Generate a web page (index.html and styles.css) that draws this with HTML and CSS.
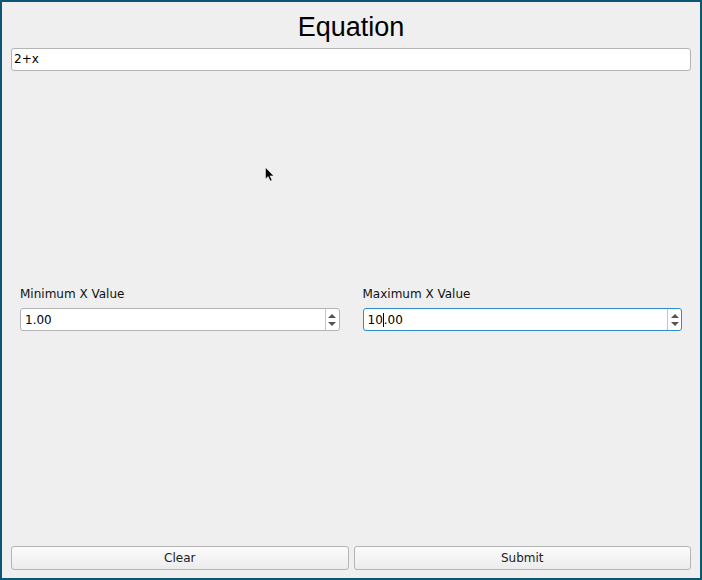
FILE: index.html
```html
<!DOCTYPE html>
<html>
<head>
<meta charset="utf-8">
<link rel="stylesheet" href="styles.css">
</head>
<body>
<div class="window">
  <h1 class="title">Equation</h1>
  <div class="lineedit">2+x</div>
  <div class="middle">
    <div class="range">
      <div class="field">
        <div class="label">Minimum X Value</div>
        <div class="spinbox">
          <div class="spin-text">1.00</div>
          <div class="spin-buttons">
            <span class="arrow-up"></span>
            <span class="arrow-down"></span>
          </div>
        </div>
      </div>
      <div class="field">
        <div class="label">Maximum X Value</div>
        <div class="spinbox focused">
          <div class="spin-text">10<span class="caret"></span>.00</div>
          <div class="spin-buttons">
            <span class="arrow-up"></span>
            <span class="arrow-down"></span>
          </div>
        </div>
      </div>
    </div>
  </div>
  <div class="buttons">
    <button class="btn">Clear</button>
    <button class="btn">Submit</button>
  </div>
  <svg class="pointer" width="11" height="16" viewBox="0 0 11 16">
    <polygon points="0.5,0.5 0.5,12 3.1,9.5 5.2,14 7,13.2 5,8.9 8.7,8.9" fill="#000" stroke="#fff" stroke-width="0.5"/>
  </svg>
</div>
</body>
</html>
```
FILE: styles.css
```css
html, body {
  margin: 0;
  padding: 0;
}
body {
  font-family: "DejaVu Sans", sans-serif;
  font-size: 12px;
  color: #000;
}
.window {
  position: relative;
  width: 702px;
  height: 580px;
  box-sizing: border-box;
  border: 2px solid #0b5577;
  background: #efefef;
  padding: 9px 9px 8px 9px;
  display: flex;
  flex-direction: column;
}
.title {
  margin: 1px 0 5px 0;
  font-family: "Liberation Sans", Arial, sans-serif;
  font-weight: normal;
  font-size: 27px;
  line-height: 31px;
  text-align: center;
  color: #000;
}
.lineedit {
  height: 23px;
  box-sizing: border-box;
  border: 1px solid #b4b4b4;
  border-radius: 3px;
  background: #fff;
  padding: 0 2px;
  line-height: 21px;
}
.middle {
  flex: 1;
  display: flex;
  flex-direction: column;
  justify-content: center;
  padding: 0 9px;
}
.range {
  display: grid;
  grid-template-columns: 1fr 1fr;
  column-gap: 23px;
}
.field {
  display: flex;
  flex-direction: column;
  gap: 6px;
}
.label {
  line-height: 16px;
  color: #111;
}
.spinbox {
  height: 23px;
  box-sizing: border-box;
  border: 1px solid #b4b4b4;
  border-radius: 3px;
  background: #fff;
  display: flex;
}
.spinbox.focused {
  border-color: #308cc6;
}
.spin-text {
  flex: 1;
  padding: 1px 0 0 4px;
  line-height: 20px;
  white-space: nowrap;
}
.caret {
  display: inline-block;
  width: 1px;
  height: 14px;
  background: #000;
  vertical-align: -3px;
}
.spin-buttons {
  width: 13px;
  border-left: 1px solid #c4c4c4;
  display: flex;
  flex-direction: column;
  align-items: center;
  justify-content: center;
  gap: 4px;
}
.arrow-up {
  width: 0;
  height: 0;
  border-left: 4px solid transparent;
  border-right: 4px solid transparent;
  border-bottom: 4px solid #555;
}
.arrow-down {
  width: 0;
  height: 0;
  border-left: 4px solid transparent;
  border-right: 4px solid transparent;
  border-top: 4px solid #555;
}
.buttons {
  display: grid;
  grid-template-columns: 1fr 1fr;
  column-gap: 5px;
}
.btn {
  height: 24px;
  box-sizing: border-box;
  border: 1px solid #b4b4b4;
  border-radius: 3px;
  background: linear-gradient(#fbfbfb, #ececec);
  font-family: "DejaVu Sans", sans-serif;
  font-size: 12px;
  color: #222;
  padding: 0;
  margin: 0;
}
.pointer {
  position: absolute;
  left: 262.5px;
  top: 164.5px;
}
```
